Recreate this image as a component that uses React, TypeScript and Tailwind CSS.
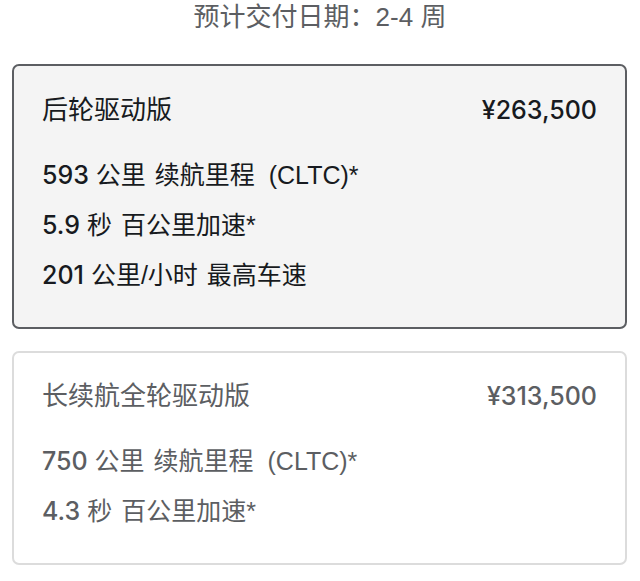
import React from "react";

const font = { fontFamily: '"Liberation Sans", "Noto Sans CJK SC", sans-serif' };
const numFont = { fontFamily: 'Inter, "Noto Sans CJK SC", sans-serif' };

type Spec = { num: string; unit: string; label: string };

function Card({
  title,
  price,
  specs,
  selected,
}: {
  title: string;
  price: string;
  specs: Spec[];
  selected: boolean;
}) {
  return (
    <div
      className={
        selected
          ? "rounded-[7px] border-2 border-[#5c5e62] bg-[#f4f4f4] px-[28px] pt-[26px] pb-[26px] text-[#171a20]"
          : "rounded-[7px] border-2 border-[#dcdcdc] bg-white px-[28px] pt-[25px] pb-[26px] text-[#5c5e62]"
      }
    >
      <div className="flex items-center justify-between h-[36px]">
        <span className="text-[26px] leading-[36px]">{title}</span>
        <span className="text-[25px] leading-[36px] font-medium" style={numFont}>
          {price}
        </span>
      </div>
      <div className="mt-[23px] flex flex-col">
        {specs.map((s) => (
          <div key={s.num} className="h-[50px] flex items-center text-[25px] whitespace-pre">
            <span className="font-medium" style={numFont}>
              {s.num}
            </span>
            <span> {s.unit}</span>
            <span className="ml-[9px]">{s.label}</span>
          </div>
        ))}
      </div>
    </div>
  );
}

export default function App() {
  return (
    <div className="w-[640px] h-[581px] bg-white overflow-hidden" style={font}>
      <div className="h-[35px] flex items-center justify-center text-[26px] text-[#5c5e62]">
        预计交付日期：2-4 周
      </div>
      <div className="pl-[12px] pr-[13px] pt-[29px] flex flex-col gap-[22px]">
        <Card
          selected
          title="后轮驱动版"
          price="¥263,500"
          specs={[
            { num: "593", unit: "公里", label: "续航里程  (CLTC)*" },
            { num: "5.9", unit: "秒", label: "百公里加速*" },
            { num: "201", unit: "公里/小时", label: "最高车速" },
          ]}
        />
        <Card
          selected={false}
          title="长续航全轮驱动版"
          price="¥313,500"
          specs={[
            { num: "750", unit: "公里", label: "续航里程  (CLTC)*" },
            { num: "4.3", unit: "秒", label: "百公里加速*" },
          ]}
        />
      </div>
    </div>
  );
}
